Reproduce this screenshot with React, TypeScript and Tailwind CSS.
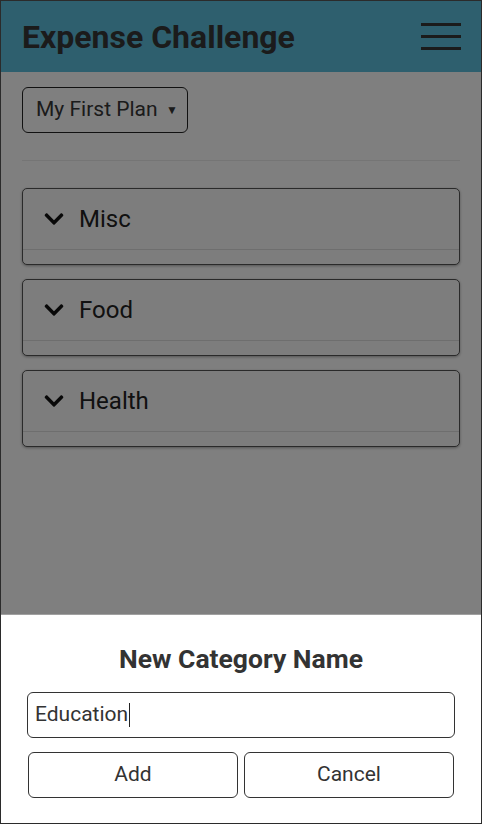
import { FaChevronDown } from "react-icons/fa";

const CATEGORIES = ["Misc", "Food", "Health"];

export default function App() {
  return (
    <div
      className="relative h-[824px] w-full overflow-hidden border border-[#2b2b2b] bg-white text-[#363636]"
      style={{ fontFamily: "Roboto, 'Noto Sans', sans-serif" }}
    >
      {/* Header */}
      <header className="flex h-[71px] items-center justify-between bg-[#5cbedc] pl-[21px] pr-[20px]">
        <h1 className="text-[32px] font-bold leading-none">Expense Challenge</h1>
        <button className="flex w-[40px] flex-col gap-[8.5px]">
          <span className="block h-[3.5px] w-full bg-[#363636]" />
          <span className="block h-[3.5px] w-full bg-[#363636]" />
          <span className="block h-[3.5px] w-full bg-[#363636]" />
        </button>
      </header>

      <main className="px-[21px]">
        <div className="mt-[15px] flex h-[46px] w-[166px] items-center justify-between rounded-[6px] border border-[#222] pl-[13px] pr-[9px]">
          <span className="text-[21px]">My First Plan</span>
          <span className="text-[12px]">▼</span>
        </div>

        <hr className="mt-[27px] border-t border-[#eaeaea]" />

        <div className="mt-[27px] flex flex-col gap-[14px]">
          {CATEGORIES.map((c) => (
            <div key={c} className="h-[77px] rounded-[5px] border border-[#555] bg-[#fbfbfb] shadow-[0_1px_3px_rgba(0,0,0,0.35)]">
              <div className="flex h-[61px] items-center gap-[14px] border-b border-[#dcdcdc] pl-[20px]">
                <FaChevronDown className="h-[22px] w-[22px] text-[#111]" />
                <span className="text-[24px] text-[#222]">{c}</span>
              </div>
            </div>
          ))}
        </div>
      </main>

      {/* Dim overlay */}
      <div className="absolute inset-0 bg-black/50" />

      {/* Bottom sheet */}
      <div className="absolute inset-x-0 bottom-0 z-10 h-[209px] border-t border-[#a0a0a0] bg-white">
        <h2 className="mt-[31px] text-center text-[26.5px] font-bold leading-none text-[#333]">New Category Name</h2>
        <div className="mx-[26px] mt-[19px] flex h-[46px] items-center rounded-[6px] border border-[#333] px-[7px]">
          <span className="text-[21px] text-[#333]">Education</span>
          <span className="ml-px h-[24px] w-px bg-[#222]" />
        </div>
        <div className="mx-[27px] mt-[14px] flex gap-[6px]">
          <button className="h-[46px] flex-1 rounded-[6px] border border-[#333] text-[21px] text-[#333]">Add</button>
          <button className="h-[46px] flex-1 rounded-[6px] border border-[#333] text-[21px] text-[#333]">Cancel</button>
        </div>
      </div>
    </div>
  );
}
